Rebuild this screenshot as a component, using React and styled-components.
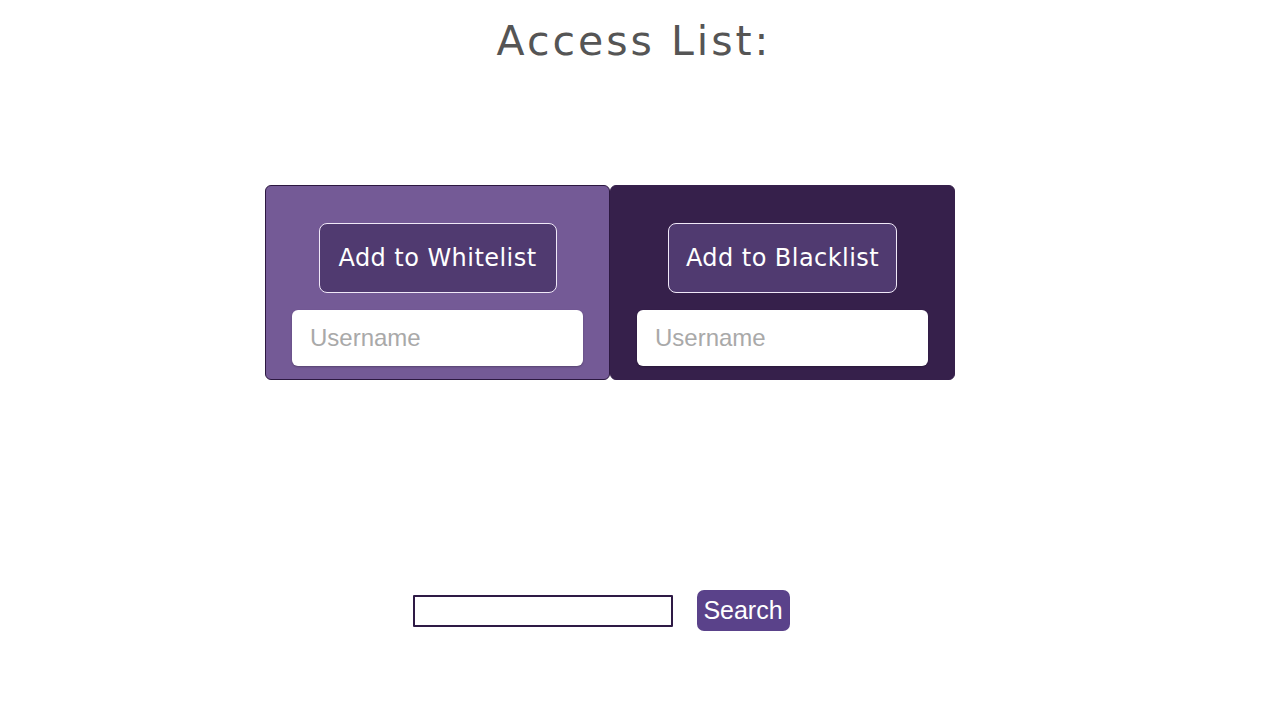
import React from "react";
import styled, { createGlobalStyle } from "styled-components";

const GlobalStyle = createGlobalStyle`
  html, body {
    margin: 0;
    padding: 0;
    background: #ffffff;
  }
  * {
    box-sizing: border-box;
  }
`;

const Page = styled.div`
  width: 1280px;
  min-height: 711px;
  display: flex;
  flex-direction: column;
  align-items: center;
`;

const Title = styled.h1`
  margin: 14px 0 0 0;
  padding-right: 12px;
  font-family: "DejaVu Sans", "Open Sans", sans-serif;
  font-weight: 400;
  font-size: 41px;
  letter-spacing: 3px;
  line-height: 54px;
  color: #555555;
`;

const Lists = styled.div`
  display: flex;
  margin-top: 117px;
  padding-right: 60px;
`;

const Card = styled.div`
  width: ${(p) => p.w}px;
  height: 195px;
  background: ${(p) => p.bg};
  border: 1px solid ${(p) => p.edge};
  border-radius: 6px;
  padding: 37px 26px 0;
  display: flex;
  flex-direction: column;
  align-items: center;
`;

const AddButton = styled.button`
  width: ${(p) => p.w}px;
  height: 70px;
  background: #503a70;
  border: 1px solid #f0e8f8;
  border-radius: 8px;
  color: #ffffff;
  font-family: "DejaVu Sans", "Open Sans", sans-serif;
  font-size: 24px;
  letter-spacing: 0.45px;
  padding: 0;
  cursor: pointer;
`;

const NameInput = styled.input`
  width: 291px;
  height: 56px;
  margin-top: 17px;
  border: none;
  border-radius: 6px;
  background: #ffffff;
  padding: 0 18px;
  font-family: "Liberation Sans", Arial, sans-serif;
  font-size: 24px;
  color: #333;
  box-shadow: 0 1px 2px rgba(0, 0, 0, 0.25);

  &::placeholder {
    color: #a9a9a9;
  }
`;

const SearchRow = styled.div`
  display: flex;
  align-items: center;
  gap: 24px;
  margin-top: 210px;
  padding-right: 78px;
`;

const SearchInput = styled.input`
  width: 260px;
  height: 32px;
  border: 2px solid #2e1a45;
  border-radius: 1px;
  background: #ffffff;
`;

const SearchButton = styled.button`
  width: 93px;
  height: 41px;
  background: #5a428a;
  border: none;
  border-radius: 7px;
  color: #ffffff;
  font-family: "Liberation Sans", Arial, sans-serif;
  font-size: 25px;
  padding: 0;
  cursor: pointer;
`;

export default function App() {
  return (
    <>
      <GlobalStyle />
      <Page>
        <Title>Access List:</Title>
        <Lists>
          <Card w={345} bg="#745a96" edge="#2c1840">
            <AddButton w={238}>Add to Whitelist</AddButton>
            <NameInput placeholder="Username" />
          </Card>
          <Card w={345} bg="#36204b" edge="#36204b">
            <AddButton w={229}>Add to Blacklist</AddButton>
            <NameInput placeholder="Username" />
          </Card>
        </Lists>
        <SearchRow>
          <SearchInput />
          <SearchButton>Search</SearchButton>
        </SearchRow>
      </Page>
    </>
  );
}
